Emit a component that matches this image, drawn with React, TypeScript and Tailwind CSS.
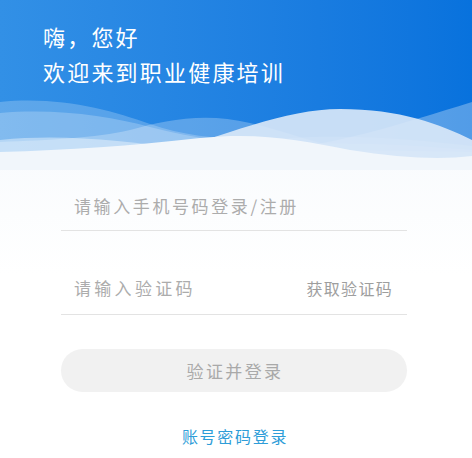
import React from "react";

function Waves() {
  return (
    <svg
      className="block w-full h-[81px]"
      viewBox="0 89 472 81"
      preserveAspectRatio="none"
    >
      <path d="M0,102 C60,96 110,110 150,124 C190,138 240,142 290,138 C360,134 420,140 472,146 L472,170 L0,170 Z" fill="#ffffff" fillOpacity="0.22" />
      <path d="M0,113 C55,108 110,116 150,127 C200,140 250,146 300,144 C370,142 420,146 472,150 L472,170 L0,170 Z" fill="#ffffff" fillOpacity="0.22" />
      <path d="M0,142 C50,140 95,138 130,130 C165,120 205,112 250,123 C285,131 320,145 350,150 L472,152 L472,170 L0,170 Z" fill="#ffffff" fillOpacity="0.25" />
      <path d="M250,152 C330,148 400,124 472,102 L472,170 L250,170 Z" fill="#ffffff" fillOpacity="0.3" />
      <path d="M150,158 C225,135 285,109 340,109 C400,109 440,124 472,140 L472,170 L150,170 Z" fill="#dce9f8" fillOpacity="0.9" />
      <path d="M0,140 C60,134 120,140 190,150 C220,155 240,160 260,170 L0,170 Z" fill="#ffffff" fillOpacity="0.4" />
      <path d="M0,152 C70,150 130,146 200,138 C260,132 300,140 350,150 C400,158 440,160 472,156 L472,170 L0,170 Z" fill="#f1f6fb" />
    </svg>
  );
}

export default function App() {
  return (
    <div
      className="w-[472px] h-[458px] overflow-hidden bg-gradient-to-b from-[#f1f6fb] to-white to-[60%]"
      style={{ fontFamily: '"Noto Sans CJK SC", "Noto Sans", sans-serif' }}
    >
      <div className="bg-gradient-to-r from-[#3290e6] to-[#0872dd]">
        <div className="pt-[19px] pl-[43px] text-white text-[22px] leading-[35px] tracking-[2.2px]">
          <div>嗨，您好</div>
          <div>欢迎来到职业健康培训</div>
        </div>
        <Waves />
      </div>
      <div className="pl-[61px] pr-[65px]">
        <div className="mt-[11px] h-[50px] flex items-center pl-[13px] border-b border-[#e3e3e3] text-[17px] tracking-[2.6px] text-[#acacac]">
          请输入手机号码登录/注册
        </div>
        <div className="mt-[30px] h-[54px] flex items-center justify-between pl-[13px] pr-[14px] border-b border-[#e3e3e3]">
          <span className="text-[17px] tracking-[3.3px] text-[#acacac]">请输入验证码</span>
          <span className="text-[16px] tracking-[1.3px] text-[#9e9e9e]">获取验证码</span>
        </div>
        <div className="mt-[34px] h-[43px] rounded-full bg-[#f1f1f1] flex items-center justify-center text-[17px] tracking-[2.4px] pl-[2px] text-[#a9a9a9]">
          验证并登录
        </div>
        <div className="mt-[32px] h-[24px] flex items-center justify-center text-[16px] tracking-[1.7px] pl-[2px] text-[#2e9dd8]">
          账号密码登录
        </div>
      </div>
    </div>
  );
}
